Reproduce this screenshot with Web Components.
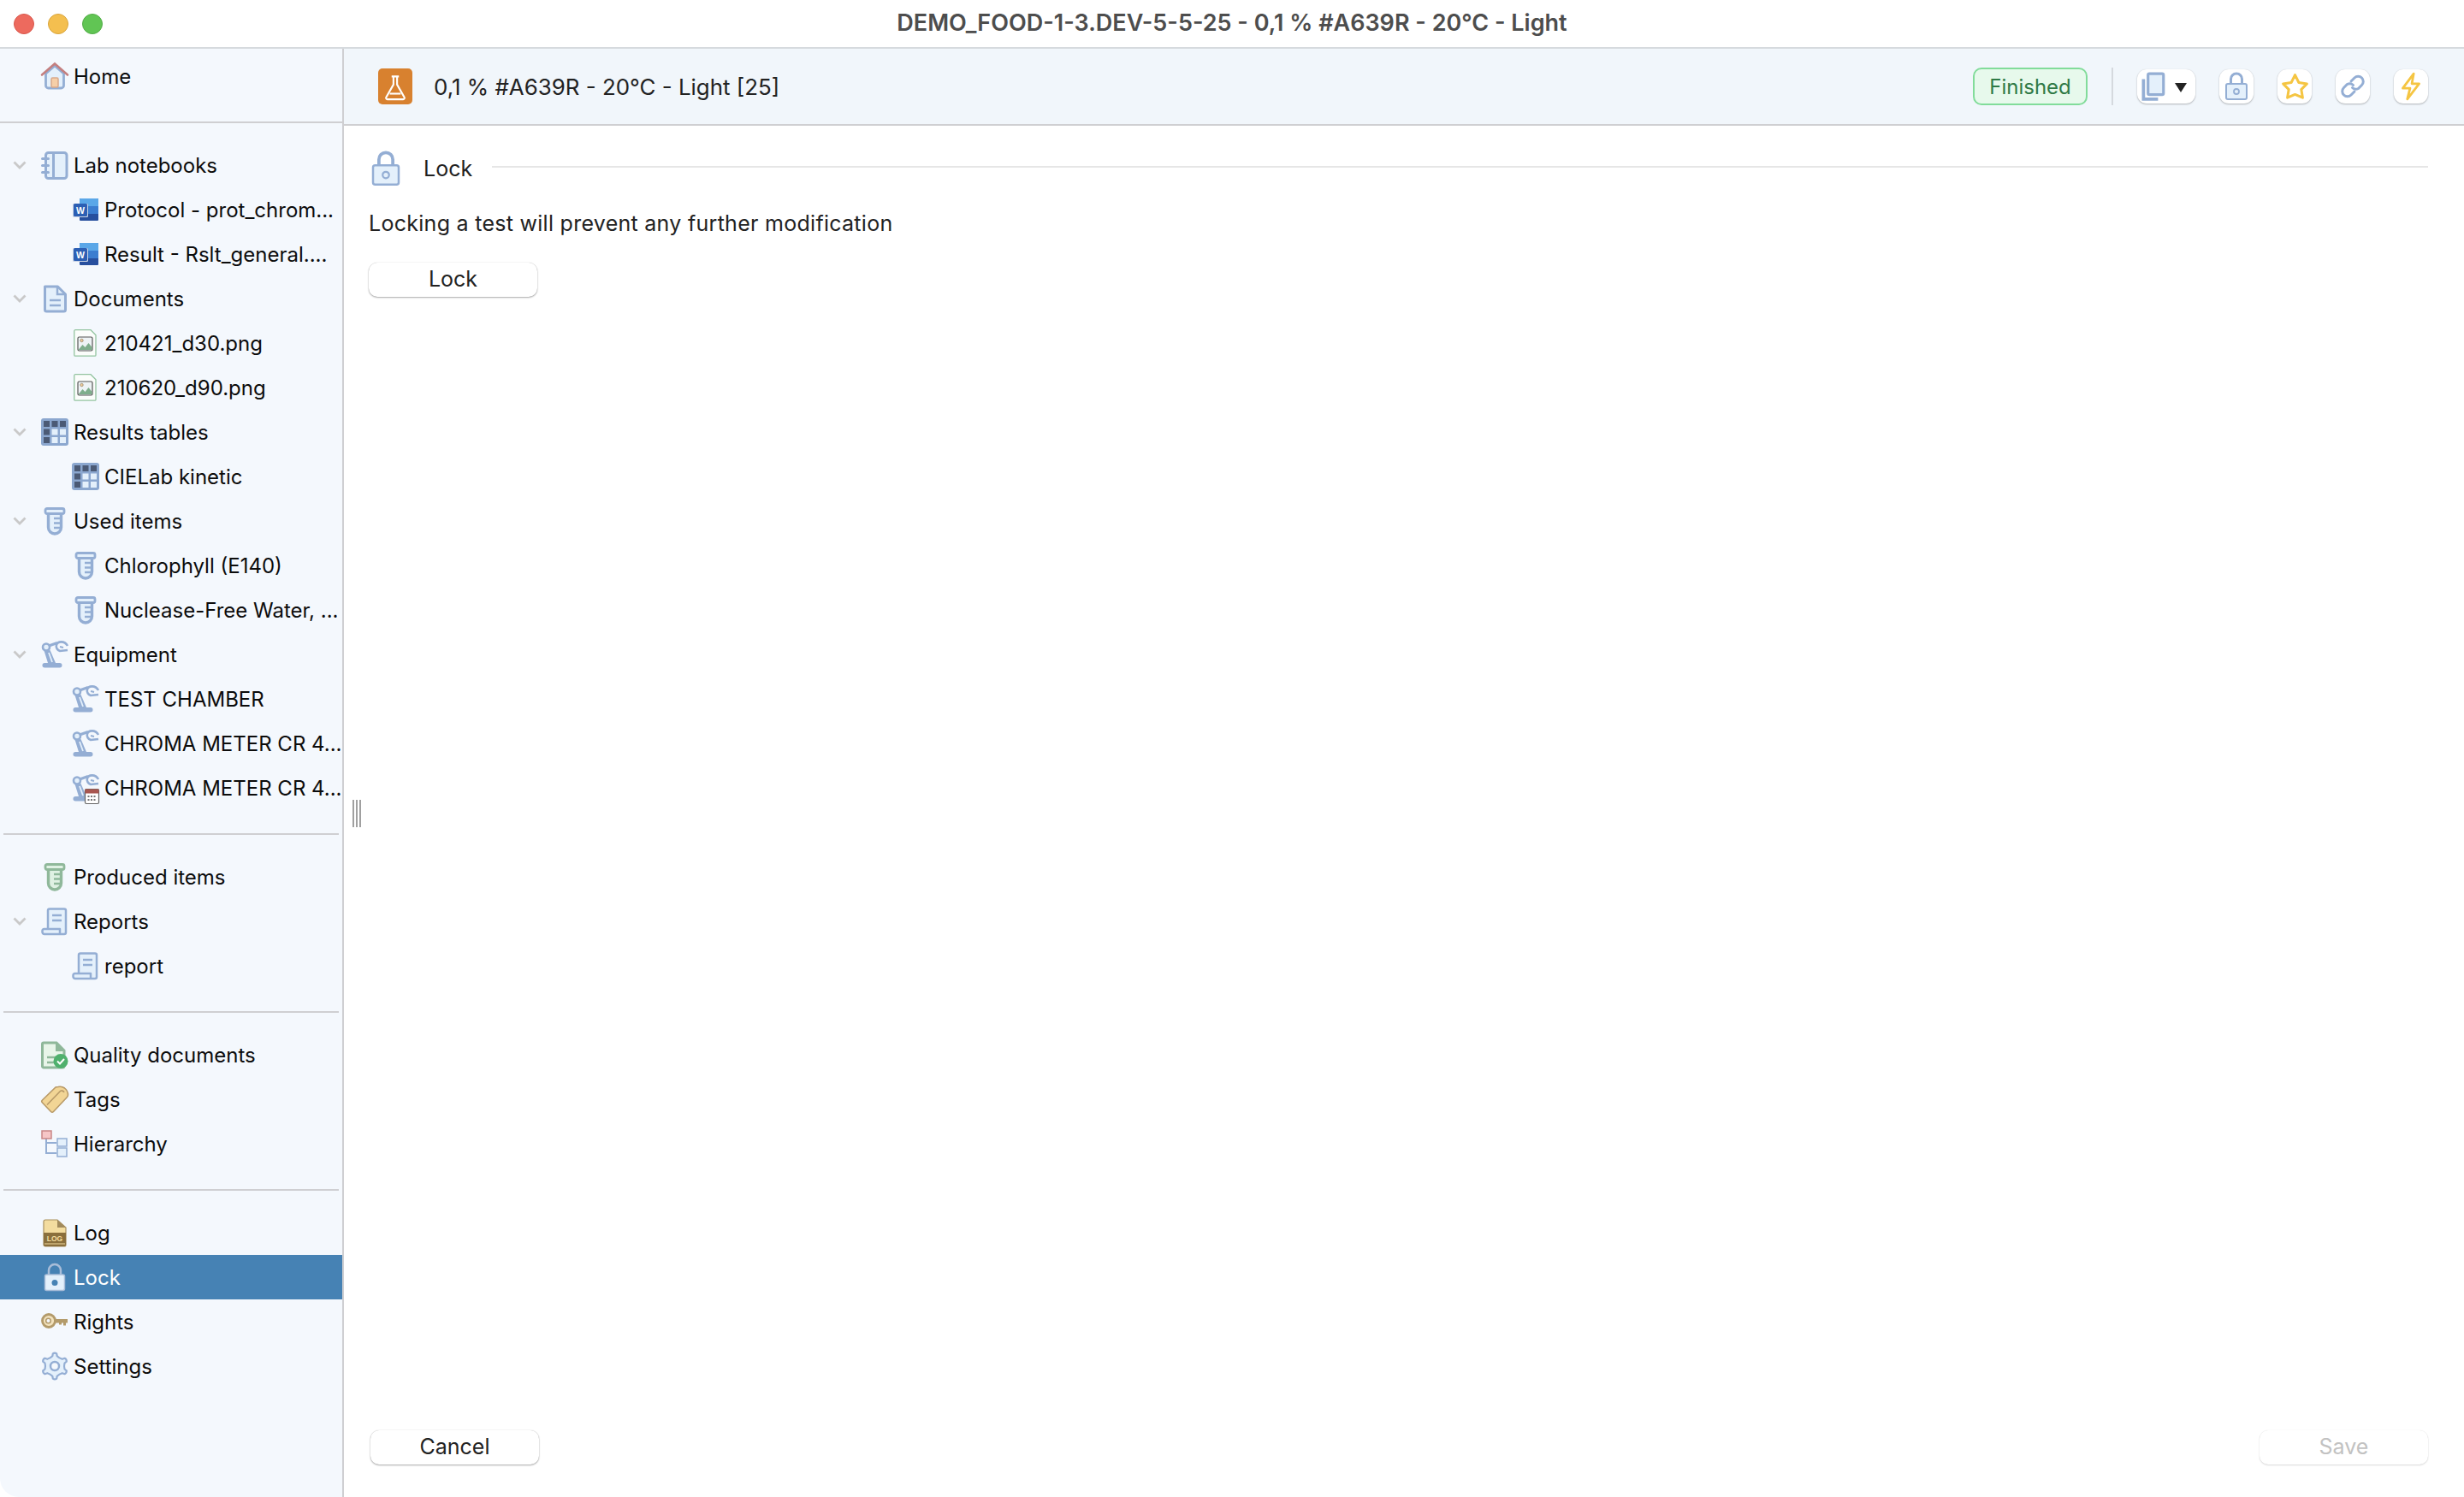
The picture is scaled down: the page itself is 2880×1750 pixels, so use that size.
<!DOCTYPE html>
<html lang="en">
<head>
<meta charset="utf-8">
<title>Lock</title>
<style>
    html, body { margin: 0; height: 100%; background: #fff; }
    body { font-family: Inter, "Liberation Sans", sans-serif; }
</style>
</head>
<body>

<app-window>
    <side-bar slot="side">
        <tree-section first>
            <tree-row icon="home">Home</tree-row>
        </tree-section>
        <tree-section>
            <tree-row icon="notebook" open>Lab notebooks</tree-row>
            <tree-row icon="word" child>Protocol - prot_chrom...</tree-row>
            <tree-row icon="word" child>Result - Rslt_general....</tree-row>
            <tree-row icon="doc" open>Documents</tree-row>
            <tree-row icon="image" child>210421_d30.png</tree-row>
            <tree-row icon="image" child>210620_d90.png</tree-row>
            <tree-row icon="table" open>Results tables</tree-row>
            <tree-row icon="table" child>CIELab kinetic</tree-row>
            <tree-row icon="tube" open>Used items</tree-row>
            <tree-row icon="tube" child>Chlorophyll (E140)</tree-row>
            <tree-row icon="tube" child>Nuclease-Free Water, ...</tree-row>
            <tree-row icon="robot" open>Equipment</tree-row>
            <tree-row icon="robot" child>TEST CHAMBER</tree-row>
            <tree-row icon="robot" child>CHROMA METER CR 4...</tree-row>
            <tree-row icon="robotcal" child>CHROMA METER CR 4...</tree-row>
        </tree-section>
        <tree-section>
            <tree-row icon="tubegreen">Produced items</tree-row>
            <tree-row icon="report" open>Reports</tree-row>
            <tree-row icon="report" child>report</tree-row>
        </tree-section>
        <tree-section>
            <tree-row icon="quality">Quality documents</tree-row>
            <tree-row icon="tag">Tags</tree-row>
            <tree-row icon="hierarchy">Hierarchy</tree-row>
        </tree-section>
        <tree-section last>
            <tree-row icon="log">Log</tree-row>
            <tree-row icon="lockwhite" selected>Lock</tree-row>
            <tree-row icon="key">Rights</tree-row>
            <tree-row icon="gear">Settings</tree-row>
        </tree-section>
    </side-bar>

    <test-header slot="main">0,1 % #A639R - 20°C - Light [25]</test-header>
    <lock-panel slot="main"></lock-panel>
</app-window>

<script>
// Shared icon colours
const S = '#94aed4', F = '#e4f0fb';
const GS = '#8fb89a', GF = '#dff1e3';

function tube(s, f) {
    return `<path d="M8.500 6v17.500a7.500 7.500 0 0 0 15 0V6" fill="${f}" stroke="${s}" stroke-width="3.400"/>
        <rect x="5" y="1.500" width="22" height="6" rx="2" fill="${f}" stroke="${s}" stroke-width="2.800"/>
        <path d="M15 13h8M15 18.500h8M15 24h7" stroke="${s}" stroke-width="2.400"/>`;
}

const robot = `<rect x="1.500" y="26" width="23" height="5.500" rx="2.700" fill="${S}"/>
    <circle cx="6" cy="7.500" r="4" fill="${F}" stroke="${S}" stroke-width="2.600"/>
    <path d="M3.500 11.500L8 26h9L10.500 11z" fill="${S}"/><path d="M9 14l4 11" stroke="${F}" stroke-width="1.800"/>
    <path d="M9 6l10-3.500" stroke="${S}" stroke-width="3.400"/>
    <path d="M31 6C27.500 -.5 19 .5 18 5c-1 3 1 6 4 7l9-1" fill="none" stroke="${S}" stroke-width="2.600"/>
    <path d="M22 7l4 1" stroke="${S}" stroke-width="2"/>`;

// Builds the outline of a gear with rounded lobes
function gearPath() {
    let d = '';
    const n = 6;
    const step = Math.PI * 2 / n;
    const p = (t, r) => `${(16 + r * Math.cos(t)).toFixed(1)} ${(16 + r * Math.sin(t)).toFixed(1)}`;
    for (let i = 0; i < n; i++) {
        const a = i * step - Math.PI / 2;
        d += `${i ? 'L' : 'M'}${p(a - step * .22, 12)}L${p(a - step * .14, 14.800)}Q${p(a, 16.200)} ${p(a + step * .14, 14.800)}L${p(a + step * .22, 12)}Q${p(a + step * .5, 10.500)} ${p(a + step * .78, 12)}`;
    }
    return d + 'z';
}

const ICONS = {
    home: `<path d="M5.500 13v14a3 3 0 0 0 3 3h15a3 3 0 0 0 3-3V13L16 4z" fill="${F}" stroke="${S}" stroke-width="2.800"/>
        <path d="M1 14.500L16 1.500l15 13" fill="none" stroke="#c47f7f" stroke-width="2.600" stroke-linecap="round"/>
        <rect x="12" y="18" width="8" height="11" rx="1.500" fill="#f6cfa8" stroke="#d9a98a" stroke-width="1.500"/>`,
    notebook: `<rect x="5.500" y="1.500" width="24.500" height="30" rx="3" fill="${F}" stroke="${S}" stroke-width="3"/>
        <path d="M14.500 1.500v30" stroke="${S}" stroke-width="3"/>
        <path d="M1.500 8.500h7M1.500 16.500h7M1.500 24.500h7" stroke="${S}" stroke-width="3" stroke-linecap="round"/>`,
    word: `<rect x="9" y="3" width="22" height="26" rx="1" fill="#274f9e"/>
        <path d="M9 4a1 1 0 0 1 1-1h20a1 1 0 0 1 1 1v8H9z" fill="#5aa7e8"/>
        <rect x="9" y="12" width="22" height="9" fill="#3b7dd0"/>
        <rect x="1" y="9" width="18" height="16" rx="1.500" fill="#c9d3e4"/>
        <rect x="2" y="9" width="16" height="15" rx="1.500" fill="#2c5fb4"/>
        <text x="10" y="20.500" text-anchor="middle" font-family="Liberation Sans" font-weight="700" font-size="10.500" fill="#fff">W</text>`,
    doc: `<path d="M4.500 2h15l9 9v18a2 2 0 0 1-2 2h-20a2 2 0 0 1-2-2z" fill="${F}" stroke="${S}" stroke-width="3" stroke-linejoin="round"/>
        <path d="M19 2v9h9" fill="none" stroke="${S}" stroke-width="2.500"/>
        <path d="M10 18h13M10 24h13" stroke="${S}" stroke-width="2.500"/>`,
    image: `<path d="M4 .7h18l6 6V30a1.200 1.200 0 0 1-1.200 1.200H4A1.200 1.200 0 0 1 2.800 30V2A1.200 1.200 0 0 1 4 .7z" fill="#fbfdfb" stroke="#93c4a0" stroke-width="1.300"/>
        <rect x="7" y="9" width="17" height="16" rx="1.500" fill="#eef3f5" stroke="#555" stroke-width="1.200"/>
        <path d="M7.500 24l5-6 3 3 4-5 4 5v3z" fill="#7fae8c"/>
        <circle cx="11.500" cy="13" r="1.700" fill="#f3cf9d" stroke="#8a7a5d" stroke-width=".7"/>`,
    table: `<rect width="32" height="32" rx="3" fill="#8ba7cf"/>
        ${[3, 12.500, 22].map((y, r) => [3, 12.500, 22].map((x, c) =>
            `<rect x="${x}" y="${y}" width="7" height="7" fill="${r === 0 || c === 0 ? '#4b5a75' : F}"/>`).join('')).join('')}`,
    tube: tube(S, F),
    tubegreen: tube(GS, GF),
    robot: robot,
    robotcal: `${robot}<rect x="15.500" y="17.500" width="16" height="17" rx="1.500" fill="#fff" stroke="#666" stroke-width="1.200"/>
        <rect x="15.500" y="17.500" width="16" height="5" fill="#a9564f"/>
        <path d="M18.500 26h10M18.500 30h10" stroke="#777" stroke-width="1.800" stroke-dasharray="2 1.500"/>`,
    report: `<path d="M8 25V3.500a2 2 0 0 1 2-2h17a2 2 0 0 1 2 2V29a2 2 0 0 1-2 2H4a2.500 2.500 0 0 1-2.500-2.500V27a2 2 0 0 1 2-2H22v6" fill="${F}" stroke="${S}" stroke-width="2.500" stroke-linejoin="round"/>
        <path d="M13 9h11M13 15h11" stroke="${S}" stroke-width="2.500"/>`,
    quality: `<path d="M3 2h15l9 9v18a2 2 0 0 1-2 2H3a1.500 1.500 0 0 1-1.500-1.500V3.500A1.500 1.500 0 0 1 3 2z" fill="#e8f5e9" stroke="${GS}" stroke-width="3"/>
        <path d="M18 2v9h9" fill="${GS}" stroke="${GS}" stroke-width="2"/>
        <path d="M7 19h12M7 25h8" stroke="${GS}" stroke-width="2.500"/>
        <circle cx="23" cy="23.500" r="8.500" fill="#4fb06d"/>
        <path d="M19 23.500l3 3 5-5.500" fill="none" stroke="#fff" stroke-width="2"/>`,
    tag: `<path d="M20 1.500l-3 .5L1.500 17c-1 1-1 2 0 3l10 10.500c1 1 2 1 3 0L30 14c1-1 1.500-2 1.500-3 0-3-1.500-6-4-8-2-1.500-5-2-7.500-1.500z" fill="#f2d595" stroke="#b89a68" stroke-width="1.600"/>
        <path d="M7 22.500L22.500 6.500c1-1 3.500-.5 4.500 1.500" fill="none" stroke="#b89a68" stroke-width="1.600"/>`,
    hierarchy: `<path d="M6 10v17h12M6 15h12" fill="none" stroke="${S}" stroke-width="2"/>
        <rect x="1" y="1" width="11" height="9" fill="#f6c6c6" stroke="#c98787" stroke-width="1.500"/>
        <rect x="19" y="10" width="11" height="9" fill="${F}" stroke="${S}" stroke-width="1.500"/>
        <rect x="19" y="21" width="11" height="10" fill="${F}" stroke="${S}" stroke-width="1.500"/>`,
    log: `<path d="M5 1h14l10 9v20a2 2 0 0 1-2 2H5a2 2 0 0 1-2-2V3a2 2 0 0 1 2-2z" fill="#f3dc9f" stroke="#a8905f" stroke-width="1.200"/>
        <path d="M19 1v9h10z" fill="#a18a5c"/>
        <path d="M3 16h26v14a2 2 0 0 1-2 2H5a2 2 0 0 1-2-2z" fill="#8a6f3c"/>
        <text x="16" y="25.500" text-anchor="middle" font-family="Liberation Sans" font-weight="700" font-size="8.500" fill="#f3dc9f">LOG</text>
        <path d="M4 29h24" stroke="#f3dc9f" stroke-width="1"/>`,
    lockwhite: `<path d="M9 14V8a7 7 0 0 1 14 0v6" fill="none" stroke="#a9bdd8" stroke-width="2.500"/>
        <rect x="4.500" y="13" width="23" height="18.500" rx="2" fill="${F}" stroke="#a9bdd8" stroke-width="1.500"/>
        <circle cx="16" cy="22.500" r="3.500" fill="#4682b4"/>`,
    key: `<path d="M15 13h16v4.500h-2v3h-3v-3h-2v2h-3v-2h-6z" fill="#b39b6b"/>
        <circle cx="9" cy="15" r="7.500" fill="#f2e2bd" stroke="#b39b6b" stroke-width="2.800"/>
        <circle cx="8.500" cy="15" r="2.800" fill="#f4f8fd" stroke="#b39b6b" stroke-width="1.500"/>`,
    gear: `<path d="${gearPath()}" fill="${F}" stroke="${S}" stroke-width="2.200" stroke-linejoin="round"/>
        <circle cx="16" cy="16" r="5" fill="#f4f8fd" stroke="${S}" stroke-width="2.500"/>`,
    lock: `<path d="M9.500 14V7.500a6.500 6.500 0 0 1 13 0V14" fill="none" stroke="${S}" stroke-width="3"/>
        <rect x="4" y="13" width="24" height="18" rx="2" fill="${F}" stroke="${S}" stroke-width="2"/>
        <circle cx="16" cy="22" r="3" fill="none" stroke="${S}" stroke-width="1.800"/>`,
    star: `<path d="M16 4l3.800 7.700 8.200 1.200-5.700 5.800 1.400 8.300-7.700-3.300-7.700 3.300 1.400-8.300L4 12.900l8.200-1.200z" fill="#fff" stroke="#f5c542" stroke-width="2.600" stroke-linejoin="round"/>`,
    link: `<path d="M14 10l4-4a6 6 0 0 1 8.500 8.500l-4 4a6 6 0 0 1-7-1" fill="none" stroke="${S}" stroke-width="3" stroke-linecap="round"/>
        <path d="M18 22l-4 4a6 6 0 0 1-8.500-8.500l4-4a6 6 0 0 1 7 1" fill="none" stroke="${S}" stroke-width="3" stroke-linecap="round"/>`,
    bolt: `<path d="M19 2L7 18h8l-3 12 13-17h-8z" fill="#fff" stroke="#f5c542" stroke-width="2.600" stroke-linejoin="round"/>`,
    copy: `<path d="M6 8v22h16" fill="none" stroke="${S}" stroke-width="3.500"/>
        <rect x="11" y="2" width="17" height="23" rx="1.500" fill="${F}" stroke="${S}" stroke-width="3"/>`,
    flask: `<path d="M12 5h8M14 5v9L6 28a1.500 1.500 0 0 0 1.300 2.200h17.400A1.500 1.500 0 0 0 26 28l-8-14V5" fill="none" stroke="#fff" stroke-width="2"/>
        <path d="M10 24h12" stroke="#fff" stroke-width="2"/>`,
};

/**
 * <app-icon name="..."> draws one icon of the table above.
 */
class AppIcon extends HTMLElement {
    connectedCallback() {
        const size = this.getAttribute('size') || 32;
        this.attachShadow({ mode: 'open' }).innerHTML = `
            <style>
                :host { display: block; width: ${size}px; height: ${size}px; flex: none; }
                svg { display: block; width: 100%; height: 100%; overflow: visible; }
            </style>
            <svg viewBox="0 0 32 32">${ICONS[this.getAttribute('name')]}</svg>
        `;
    }
}

/**
 * <tree-row> one line of the side tree. Attributes: icon, open, child, selected.
 */
class TreeRow extends HTMLElement {
    connectedCallback() {
        const chevron = this.hasAttribute('open')
            ? `<svg class="chevron" viewBox="0 0 16 10"><path d="M1.500 1.500L8 8l6.500-6.500" fill="none" stroke="#c9c9c9" stroke-width="2.800"/></svg>`
            : '';
        this.attachShadow({ mode: 'open' }).innerHTML = `
            <style>
                :host {
                    display: flex; align-items: center; height: 52px;
                    position: relative; box-sizing: border-box;
                    padding-left: 48px; color: #0c0c0c;
                    font-size: 24px; white-space: nowrap;
                }
                :host([child]) { padding-left: 84px; }
                :host([selected]) { background: #4682b4; color: #fff; }
                .chevron { position: absolute; left: 15px; top: 21px; width: 16px; height: 10px; }
                .label { margin-left: 6px; }
            </style>
            ${chevron}
            <app-icon name="${this.getAttribute('icon')}"></app-icon>
            <span class="label"><slot></slot></span>
        `;
    }
}

/**
 * <tree-section> group of rows, closed by a thin line.
 */
class TreeSection extends HTMLElement {
    constructor() {
        super();
        this.attachShadow({ mode: 'open' }).innerHTML = `
            <style>
                :host { display: block; padding-top: 23px; }
                :host([first]) { padding-top: 6px; }
                .rule { height: 2px; margin: 27px 4px 0; background: #cfcfd2; }
                :host([first]) .rule { margin: 27px 0 0; }
                :host([last]) .rule { display: none; }
            </style>
            <slot></slot>
            <div class="rule"></div>
        `;
    }
}

class SideBar extends HTMLElement {
    constructor() {
        super();
        this.attachShadow({ mode: 'open' }).innerHTML = `
            <style>
                :host {
                    display: block; width: 402px; flex: none; box-sizing: border-box;
                    background: #f4f8fd; border-right: 2px solid #cfcfd2;
                    border-bottom-left-radius: 22px; overflow: hidden;
                }
            </style>
            <slot></slot>
        `;
    }
}

/**
 * <ui-button> white push button. The disabled attribute greys its label.
 */
class UiButton extends HTMLElement {
    constructor() {
        super();
        this.attachShadow({ mode: 'open' }).innerHTML = `
            <style>
                :host {
                    display: flex; align-items: center; justify-content: center;
                    box-sizing: border-box; width: 197px; height: 40px; padding-bottom: 2px;
                    background: #fff; border-radius: 10px; color: #222;
                    font-size: 25px; cursor: pointer;
                    box-shadow: 0 1px 2px rgba(0,0,0,.32), 0 0 1px rgba(0,0,0,.25);
                }
                :host([disabled]) { color: #c2c2c2; box-shadow: 0 1px 2px rgba(0,0,0,.14), 0 0 1px rgba(0,0,0,.12); }
            </style>
            <slot></slot>
        `;
    }
}

/**
 * <icon-button> small white square of the header tool strip.
 */
class IconButton extends HTMLElement {
    connectedCallback() {
        const caret = this.hasAttribute('menu')
            ? `<svg class="caret" viewBox="0 0 14 11"><path d="M0 0h14L7 11z" fill="#222"/></svg>`
            : '';
        this.attachShadow({ mode: 'open' }).innerHTML = `
            <style>
                :host {
                    display: flex; align-items: center; justify-content: center; flex: none;
                    width: 40px; height: 40px; box-sizing: border-box; background: #fff;
                    border-radius: 11px; box-shadow: 0 1px 2px rgba(0,0,0,.25), 0 0 1px rgba(0,0,0,.15);
                }
                :host([menu]) { width: 68px; justify-content: flex-start; padding-left: 1px; }
                .caret { width: 14px; height: 11px; margin-left: 9px; margin-top: 3px; }
            </style>
            <app-icon name="${this.getAttribute('icon')}" size="${this.getAttribute('size') || 34}"></app-icon>
            ${caret}
        `;
    }
}

class StatusBadge extends HTMLElement {
    constructor() {
        super();
        this.attachShadow({ mode: 'open' }).innerHTML = `
            <style>
                :host {
                    display: flex; align-items: center; justify-content: center;
                    box-sizing: border-box; width: 134px; height: 44px;
                    background: #e7f9ec; border: 2px solid #82dc9a; border-radius: 10px;
                    color: #2f7a47; font-size: 24px;
                }
            </style>
            <slot></slot>
        `;
    }
}

/**
 * <test-header> strip over the panel: icon, test name, state and tools.
 */
class TestHeader extends HTMLElement {
    constructor() {
        super();
        this.attachShadow({ mode: 'open' }).innerHTML = `
            <style>
                :host {
                    display: flex; align-items: center; height: 90px; flex: none;
                    box-sizing: border-box; background: #f1f6fb;
                    border-bottom: 2px solid #cfcfd2; padding: 0 42px 0 40px;
                    color: #222; font-size: 25.900px;
                }
                .flask {
                    display: flex; align-items: center; justify-content: center;
                    width: 40px; height: 42px; border-radius: 5px; background: #d8812f; flex: none;
                }
                .name { margin-left: 25px; flex: 1; }
                .sep { width: 2px; height: 44px; background: #d5d9de; margin: 0 28px; }
                .tools { display: flex; gap: 28px; }
            </style>
            <div class="flask"><app-icon name="flask" size="34"></app-icon></div>
            <span class="name"><slot></slot></span>
            <status-badge>Finished</status-badge>
            <div class="sep"></div>
            <div class="tools">
                <icon-button icon="copy" menu></icon-button>
                <icon-button icon="lock" size="32"></icon-button>
                <icon-button icon="star" size="37"></icon-button>
                <icon-button icon="link" size="32"></icon-button>
                <icon-button icon="bolt" size="34"></icon-button>
            </div>
        `;
    }
}

/**
 * <lock-panel> body of the Lock page, with its Cancel and Save buttons.
 */
class LockPanel extends HTMLElement {
    constructor() {
        super();
        this.attachShadow({ mode: 'open' }).innerHTML = `
            <style>
                :host {
                    display: flex; flex-direction: column; flex: 1; min-height: 0;
                    position: relative; box-sizing: border-box; padding: 30px 42px 38px 29px;
                    color: #222; font-size: 25px;
                }
                .title { display: flex; align-items: center; gap: 24px; height: 40px; }
                .title hr { flex: 1; height: 2px; margin: 0 0 4px 0; border: 0; background: #e6e6e6; }
                .title span { margin-right: -1px; }
                p { margin: 24px 0 1px; line-height: 40px; letter-spacing: .28px; }
                .action { margin-top: 25px; }
                .foot { display: flex; justify-content: space-between; margin-top: auto; padding-left: 2px; }
                .grip {
                    position: absolute; left: 10px; top: 788px; width: 10px; height: 32px;
                    background: repeating-linear-gradient(90deg, #a0a0a0 0 2px, transparent 2px 4px);
                }
            </style>
            <div class="grip"></div>
            <div class="title">
                <app-icon name="lock" size="40"></app-icon>
                <span>Lock</span>
                <hr>
            </div>
            <p>Locking a test will prevent any further modification</p>
            <ui-button class="action">Lock</ui-button>
            <div class="foot">
                <ui-button>Cancel</ui-button>
                <ui-button disabled>Save</ui-button>
            </div>
        `;
    }
}

/**
 * <app-window> title bar with traffic lights, then the side tree and the main area.
 */
class AppWindow extends HTMLElement {
    constructor() {
        super();
        this.attachShadow({ mode: 'open' }).innerHTML = `
            <style>
                :host { display: flex; flex-direction: column; height: 1750px; overflow: hidden; }
                .bar {
                    display: flex; align-items: center; justify-content: center;
                    position: relative; height: 57px; flex: none; box-sizing: border-box;
                    background: #fff; border-bottom: 2px solid #d6dade; padding-bottom: 2px;
                    color: #4d4d4d; font-size: 27px; font-weight: 600;
                }
                .lights { position: absolute; left: 16px; top: 16px; display: flex; gap: 16px; }
                .lights i { width: 24px; height: 24px; border-radius: 50%; box-sizing: border-box; }
                .red { background: #ed6a5e; border: 1px solid #d9574c; }
                .yellow { background: #f4bf4f; border: 1px solid #d9a53c; }
                .green { background: #61c554; border: 1px solid #52ac47; }
                .body { display: flex; flex: 1; min-height: 0; }
                .main { display: flex; flex-direction: column; flex: 1; min-width: 0; }
            </style>
            <div class="bar">
                <div class="lights"><i class="red"></i><i class="yellow"></i><i class="green"></i></div>
                DEMO_FOOD-1-3.DEV-5-5-25 - 0,1 % #A639R - 20°C - Light
            </div>
            <div class="body">
                <slot name="side"></slot>
                <div class="main"><slot name="main"></slot></div>
            </div>
        `;
    }
}

customElements.define('app-icon', AppIcon);
customElements.define('tree-row', TreeRow);
customElements.define('tree-section', TreeSection);
customElements.define('side-bar', SideBar);
customElements.define('ui-button', UiButton);
customElements.define('icon-button', IconButton);
customElements.define('status-badge', StatusBadge);
customElements.define('test-header', TestHeader);
customElements.define('lock-panel', LockPanel);
customElements.define('app-window', AppWindow);
</script>
</body>
</html>
